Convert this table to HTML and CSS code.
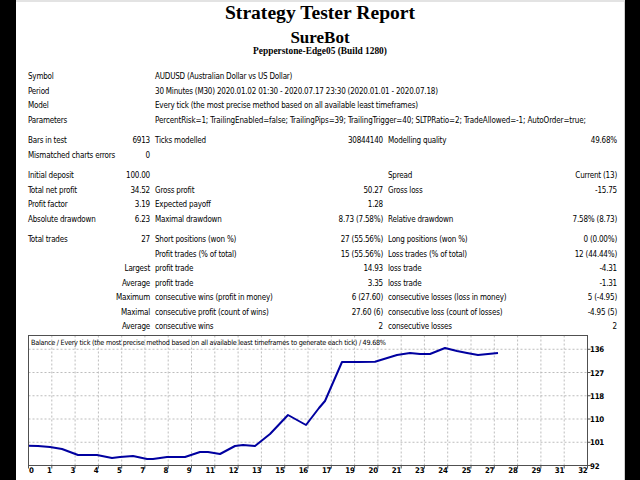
FILE: index.html
```html
<!DOCTYPE html>
<html>
<head>
<meta charset="utf-8">
<title>Strategy Tester Report</title>
<link rel="stylesheet" href="styles.css">
</head>
<body>
<div class="page">
  <header class="head">
    <h1 class="title">Strategy Tester Report</h1>
    <h2 class="ea">SureBot</h2>
    <h3 class="server">Pepperstone-Edge05 (Build 1280)</h3>
  </header>
  <div class="content">
    <div class="grid sec1">
      <div class="s2">Symbol</div><div class="s4 lab">AUDUSD (Australian Dollar vs US Dollar)</div>
      <div class="s2">Period</div><div class="s4 lab">30 Minutes (M30) 2020.01.02 01:30 - 2020.07.17 23:30 (2020.01.01 - 2020.07.18)</div>
      <div class="s2">Model</div><div class="s4 lab">Every tick (the most precise method based on all available least timeframes)</div>
      <div class="s2">Parameters</div><div class="s4 lab params">PercentRisk=1; TrailingEnabled=false; TrailingPips=39; TrailingTrigger=40; SLTPRatio=2; TradeAllowed=-1; AutoOrder=true;</div>
    </div>
    <div class="grid sec">
      <div>Bars in test</div><div class="v">6913</div><div class="lab">Ticks modelled</div><div class="v">30844140</div><div class="lab">Modelling quality</div><div class="v">49.68%</div>
      <div>Mismatched charts errors</div><div class="v">0</div><div class="s4"></div>
    </div>
    <div class="grid sec">
      <div>Initial deposit</div><div class="v">100.00</div><div></div><div></div><div class="lab">Spread</div><div class="v">Current (13)</div>
      <div>Total net profit</div><div class="v">34.52</div><div class="lab">Gross profit</div><div class="v">50.27</div><div class="lab">Gross loss</div><div class="v">-15.75</div>
      <div>Profit factor</div><div class="v">3.19</div><div class="lab">Expected payoff</div><div class="v">1.28</div><div></div><div></div>
      <div>Absolute drawdown</div><div class="v">6.23</div><div class="lab">Maximal drawdown</div><div class="v">8.73 (7.58%)</div><div class="lab">Relative drawdown</div><div class="v">7.58% (8.73)</div>
    </div>
    <div class="grid sec">
      <div>Total trades</div><div class="v">27</div><div class="lab">Short positions (won %)</div><div class="v">27 (55.56%)</div><div class="lab">Long positions (won %)</div><div class="v">0 (0.00%)</div>
      <div class="s2"></div><div class="lab">Profit trades (% of total)</div><div class="v">15 (55.56%)</div><div class="lab">Loss trades (% of total)</div><div class="v">12 (44.44%)</div>
      <div class="s2 v">Largest</div><div class="lab">profit trade</div><div class="v">14.93</div><div class="lab">loss trade</div><div class="v">-4.31</div>
      <div class="s2 v">Average</div><div class="lab">profit trade</div><div class="v">3.35</div><div class="lab">loss trade</div><div class="v">-1.31</div>
      <div class="s2 v">Maximum</div><div class="lab">consecutive wins (profit in money)</div><div class="v">6 (27.60)</div><div class="lab">consecutive losses (loss in money)</div><div class="v">5 (-4.95)</div>
      <div class="s2 v">Maximal</div><div class="lab">consecutive profit (count of wins)</div><div class="v">27.60 (6)</div><div class="lab">consecutive loss (count of losses)</div><div class="v">-4.95 (5)</div>
      <div class="s2 v">Average</div><div class="lab">consecutive wins</div><div class="v">2</div><div class="lab">consecutive losses</div><div class="v">2</div>
    </div>
    <svg class="chart" width="596" height="147" viewBox="0 0 596 147" xmlns="http://www.w3.org/2000/svg">
      <rect x="0" y="2" width="596" height="131" fill="#fff"/>
      <g class="grid-lines" stroke="#bdbdbd" stroke-width="1" stroke-dasharray="2 2">
        <line x1="0.5" y1="16.25" x2="559.5" y2="16.25"/>
        <line x1="0.5" y1="39.5" x2="559.5" y2="39.5"/>
        <line x1="0.5" y1="62.75" x2="559.5" y2="62.75"/>
        <line x1="0.5" y1="86" x2="559.5" y2="86"/>
        <line x1="0.5" y1="109.25" x2="559.5" y2="109.25"/>
        <line x1="23.8" y1="2.5" x2="23.8" y2="132.5"/>
        <line x1="47.1" y1="2.5" x2="47.1" y2="132.5"/>
        <line x1="70.4" y1="2.5" x2="70.4" y2="132.5"/>
        <line x1="93.7" y1="2.5" x2="93.7" y2="132.5"/>
        <line x1="116.9" y1="2.5" x2="116.9" y2="132.5"/>
        <line x1="140.2" y1="2.5" x2="140.2" y2="132.5"/>
        <line x1="163.5" y1="2.5" x2="163.5" y2="132.5"/>
        <line x1="186.8" y1="2.5" x2="186.8" y2="132.5"/>
        <line x1="210.1" y1="2.5" x2="210.1" y2="132.5"/>
        <line x1="233.4" y1="2.5" x2="233.4" y2="132.5"/>
        <line x1="256.7" y1="2.5" x2="256.7" y2="132.5"/>
        <line x1="280" y1="2.5" x2="280" y2="132.5"/>
        <line x1="303.3" y1="2.5" x2="303.3" y2="132.5"/>
        <line x1="326.6" y1="2.5" x2="326.6" y2="132.5"/>
        <line x1="349.9" y1="2.5" x2="349.9" y2="132.5"/>
        <line x1="373.2" y1="2.5" x2="373.2" y2="132.5"/>
        <line x1="396.4" y1="2.5" x2="396.4" y2="132.5"/>
        <line x1="419.7" y1="2.5" x2="419.7" y2="132.5"/>
        <line x1="443" y1="2.5" x2="443" y2="132.5"/>
        <line x1="466.3" y1="2.5" x2="466.3" y2="132.5"/>
        <line x1="489.6" y1="2.5" x2="489.6" y2="132.5"/>
        <line x1="512.9" y1="2.5" x2="512.9" y2="132.5"/>
        <line x1="536.2" y1="2.5" x2="536.2" y2="132.5"/>
      </g>
      <text class="ctitle" x="3" y="11.5">Balance / Every tick (the most precise method based on all available least timeframes to generate each tick) / 49.68%</text>
      <polyline fill="none" stroke="#0000a0" stroke-width="2" stroke-linejoin="round" points="0,112.7 10,113 22,114 34,116 50,122 69,122 84,125 92,124 105,123 119,126 125,126 139,124 157,124 172,119 180,119 192,121 207,113 215,112 227,113 242,101 260,82 278,92 291,75 297,68 314,29 330,29 347,28.7 369,22 382,20 392,21 402,21 417,15 429,18 439,20 450,22 460,21 470,20"/>
      <rect x="0.5" y="2.5" width="559" height="130" fill="none" stroke="#505050" stroke-width="1"/>
      <g stroke="#505050" stroke-width="1">
        <line x1="559.5" y1="16.25" x2="562.5" y2="16.25"/>
        <line x1="559.5" y1="39.5" x2="562.5" y2="39.5"/>
        <line x1="559.5" y1="62.75" x2="562.5" y2="62.75"/>
        <line x1="559.5" y1="86" x2="562.5" y2="86"/>
        <line x1="559.5" y1="109.25" x2="562.5" y2="109.25"/>
        <line x1="559.5" y1="132.5" x2="562.5" y2="132.5"/>
        <line x1="0.5" y1="132.5" x2="0.5" y2="135.5"/>
        <line x1="23.8" y1="132.5" x2="23.8" y2="135.5"/>
        <line x1="47.1" y1="132.5" x2="47.1" y2="135.5"/>
        <line x1="70.4" y1="132.5" x2="70.4" y2="135.5"/>
        <line x1="93.7" y1="132.5" x2="93.7" y2="135.5"/>
        <line x1="116.9" y1="132.5" x2="116.9" y2="135.5"/>
        <line x1="140.2" y1="132.5" x2="140.2" y2="135.5"/>
        <line x1="163.5" y1="132.5" x2="163.5" y2="135.5"/>
        <line x1="186.8" y1="132.5" x2="186.8" y2="135.5"/>
        <line x1="210.1" y1="132.5" x2="210.1" y2="135.5"/>
        <line x1="233.4" y1="132.5" x2="233.4" y2="135.5"/>
        <line x1="256.7" y1="132.5" x2="256.7" y2="135.5"/>
        <line x1="280" y1="132.5" x2="280" y2="135.5"/>
        <line x1="303.3" y1="132.5" x2="303.3" y2="135.5"/>
        <line x1="326.6" y1="132.5" x2="326.6" y2="135.5"/>
        <line x1="349.9" y1="132.5" x2="349.9" y2="135.5"/>
        <line x1="373.2" y1="132.5" x2="373.2" y2="135.5"/>
        <line x1="396.4" y1="132.5" x2="396.4" y2="135.5"/>
        <line x1="419.7" y1="132.5" x2="419.7" y2="135.5"/>
        <line x1="443" y1="132.5" x2="443" y2="135.5"/>
        <line x1="466.3" y1="132.5" x2="466.3" y2="135.5"/>
        <line x1="489.6" y1="132.5" x2="489.6" y2="135.5"/>
        <line x1="512.9" y1="132.5" x2="512.9" y2="135.5"/>
        <line x1="536.2" y1="132.5" x2="536.2" y2="135.5"/>
        <line x1="559.5" y1="132.5" x2="559.5" y2="135.5"/>
      </g>
      <g class="ylab">
        <text x="562" y="19.3">136</text>
        <text x="562" y="42.5">127</text>
        <text x="562" y="65.8">118</text>
        <text x="562" y="89">110</text>
        <text x="562" y="112.3">101</text>
        <text x="562" y="135.5">92</text>
      </g>
      <g class="xlab">
        <text x="1" y="140" class="start">0</text>
        <text x="23.8" y="140">1</text>
        <text x="47.1" y="140">3</text>
        <text x="70.4" y="140">4</text>
        <text x="93.7" y="140">5</text>
        <text x="116.9" y="140">7</text>
        <text x="140.2" y="140">8</text>
        <text x="163.5" y="140">9</text>
        <text x="186.8" y="140">11</text>
        <text x="210.1" y="140">12</text>
        <text x="233.4" y="140">13</text>
        <text x="256.7" y="140">15</text>
        <text x="280" y="140">16</text>
        <text x="303.3" y="140">17</text>
        <text x="326.6" y="140">19</text>
        <text x="349.9" y="140">20</text>
        <text x="373.2" y="140">21</text>
        <text x="396.4" y="140">23</text>
        <text x="419.7" y="140">24</text>
        <text x="443" y="140">25</text>
        <text x="466.3" y="140">27</text>
        <text x="489.6" y="140">28</text>
        <text x="512.9" y="140">29</text>
        <text x="536.2" y="140">31</text>
        <text x="559.5" y="140">32</text>
      </g>
    </svg>
  </div>
</div>
</body>
</html>
```

FILE: styles.css
```css
html, body {
  margin: 0;
  padding: 0;
  background: #000;
}
.page {
  margin-left: 16px;
  width: 608px;
  height: 478px;
  background: #fff;
  border-top: 2px solid #e3e3e3;
  border-right: 1px solid #cfcfcf;
  overflow: hidden;
}
.head {
  text-align: center;
  font-family: "Liberation Serif", "Times New Roman", serif;
  font-weight: bold;
  color: #000;
}
.title {
  margin: 0;
  font-size: 19.6px;
  line-height: 22px;
}
.ea {
  margin: 6px 0 0;
  font-size: 17px;
  line-height: 16px;
}
.server {
  margin: 0;
  font-size: 9.4px;
  line-height: 10px;
}
.content {
  padding-left: 12px;
  padding-right: 7px;
  font-family: "DejaVu Sans Condensed", "Liberation Sans", sans-serif;
  font-size: 8px;
  letter-spacing: -0.2px;
  color: #000;
}
.grid {
  display: grid;
  grid-template-columns: 92px 30px 170px 63px 172px 62px;
  grid-auto-rows: 14.5px;
  line-height: 14.5px;
  white-space: nowrap;
}
.sec1 {
  margin-top: 14px;
}
.sec {
  margin-top: 6px;
}
.s2 {
  grid-column: span 2;
}
.s4 {
  grid-column: span 4;
}
.v {
  text-align: right;
}
.lab {
  padding-left: 5px;
}
.params {
  letter-spacing: -0.13px;
}
.chart {
  display: block;
  margin-top: -1.5px;
}
.chart text {
  font-family: "DejaVu Sans Condensed", "Liberation Sans", sans-serif;
  fill: #000;
}
.ctitle {
  font-size: 7.2px;
  letter-spacing: -0.25px;
}
.ylab text {
  font-size: 7.8px;
  font-weight: bold;
  letter-spacing: -0.2px;
}
.xlab text {
  font-size: 7.8px;
  font-weight: bold;
  letter-spacing: -0.2px;
  text-anchor: end;
}
.xlab text.start {
  text-anchor: start;
}
```
